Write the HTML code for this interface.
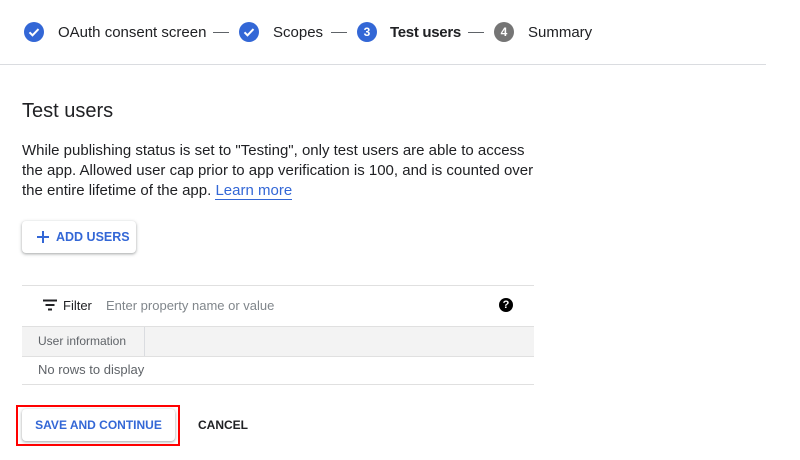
<!DOCTYPE html>
<html><head><style>
body{margin:0;width:800px;height:460px;background:#fff;font-family:"Liberation Sans",Arial,sans-serif;color:#202124;position:relative;overflow:hidden}
.a{position:absolute}
.c{width:20px;height:20px;border-radius:50%;background:#3367d6;color:#fff;font-size:12px;font-weight:bold;text-align:center;line-height:20px}
.st{font-size:15px;line-height:20px}
.dash{width:16px;height:1px;background:#5f6368}
.btn{background:#fff;border-radius:4px;box-shadow:0 1px 2px rgba(60,64,67,.3),0 1px 3px 1px rgba(60,64,67,.15);color:#3367d6;font-weight:bold;font-size:12.5px;line-height:32px}
</style></head><body>
<div class="a c" style="left:24px;top:22px"><svg width="20" height="20" viewBox="0 0 20 20"><path d="M5.5 10.3l3 3 6-6.2" stroke="#fff" stroke-width="2" fill="none"/></svg></div>
<div class="a st" style="left:58px;top:23px">OAuth consent screen</div>
<div class="a dash" style="left:213px;top:32px"></div>
<div class="a c" style="left:239px;top:22px"><svg width="20" height="20" viewBox="0 0 20 20"><path d="M5.5 10.3l3 3 6-6.2" stroke="#fff" stroke-width="2" fill="none"/></svg></div>
<div class="a st" style="left:273px;top:23px">Scopes</div>
<div class="a dash" style="left:331px;top:32px"></div>
<div class="a c" style="left:357px;top:22px">3</div>
<div class="a st" style="left:390px;top:23px;font-weight:bold;letter-spacing:-0.3px">Test users</div>
<div class="a dash" style="left:468px;top:32px"></div>
<div class="a c" style="left:494px;top:22px;background:#757575">4</div>
<div class="a st" style="left:528px;top:23px">Summary</div>
<div class="a" style="left:0;top:64px;width:766px;height:1px;background:#dadce0"></div>
<div class="a" style="left:22px;top:99px;font-size:20px;line-height:24px">Test users</div>
<div class="a" style="left:22px;top:141px;width:520px;font-size:15px;line-height:20px">While publishing status is set to "Testing", only test users are able to access the app. Allowed user cap prior to app verification is 100, and is counted over the entire lifetime of the app. <span style="color:#3367d6;border-bottom:1px solid #3367d6">Learn more</span></div>
<div class="a btn" style="left:22px;top:221px;width:114px;height:32px"><svg style="position:absolute;left:14px;top:9px" width="14" height="14" viewBox="0 0 14 14"><path d="M7 1v12M1 7h12" stroke="#3367d6" stroke-width="2"/></svg><span style="position:absolute;left:34px">ADD USERS</span></div>
<div class="a" style="left:22px;top:285px;width:512px;height:1px;background:#e0e0e0"></div>
<svg class="a" style="left:42px;top:299px" width="16" height="12" viewBox="0 0 16 12"><path d="M1 1.5h14M3.5 6h9M6 10.5h4" stroke="#202124" stroke-width="2"/></svg>
<div class="a" style="left:63px;top:298px;font-size:13px;line-height:16px">Filter</div>
<div class="a" style="left:106px;top:298px;font-size:13px;line-height:16px;color:#80868b">Enter property name or value</div>
<div class="a" style="left:499px;top:298px;width:14px;height:14px;border-radius:50%;background:#000;color:#fff;font-size:11px;font-weight:bold;text-align:center;line-height:14px">?</div>
<div class="a" style="left:22px;top:326px;width:512px;height:29px;background:#f3f3f3;border-top:1px solid #e0e0e0;border-bottom:1px solid #e0e0e0"></div>
<div class="a" style="left:144px;top:327px;width:1px;height:29px;background:#dadce0"></div>
<div class="a" style="left:38px;top:334px;font-size:12px;line-height:14px;color:#5f6368">User information</div>
<div class="a" style="left:38px;top:362px;font-size:13px;line-height:16px;color:#5f6368">No rows to display</div>
<div class="a" style="left:22px;top:384px;width:512px;height:1px;background:#e0e0e0"></div>
<div class="a btn" style="left:22px;top:409px;width:153px;height:32px;text-align:center;font-size:12px">SAVE AND CONTINUE</div>
<div class="a" style="left:16px;top:405px;width:160px;height:37px;border:2px solid #f00"></div>
<div class="a" style="left:198px;top:417px;font-size:12px;font-weight:bold;line-height:16px">CANCEL</div>
</body></html>
